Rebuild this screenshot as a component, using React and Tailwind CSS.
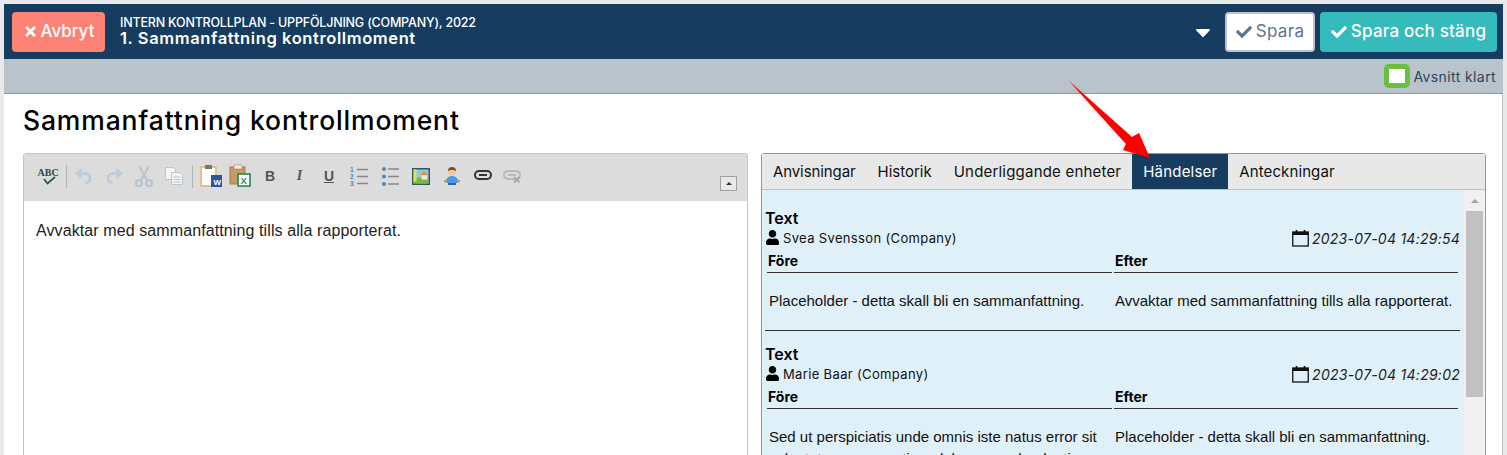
import React from 'react';
import { FaCheck, FaTimes, FaUser, FaCaretDown } from 'react-icons/fa';

const heading = "font-['Inter',sans-serif]";
const body = "font-['Liberation_Sans',Arial,sans-serif]";

const tabs = [
  { label: 'Anvisningar', className: 'tracking-[-0.1px]' },
  { label: 'Historik', className: 'tracking-[0px]' },
  { label: 'Underliggande enheter', className: 'tracking-[0.2px]' },
  { label: 'Händelser', className: 'tracking-[0.2px]' },
  { label: 'Anteckningar', className: 'tracking-[0.1px]' },
];

const events = [
  {
    user: 'Svea Svensson (Company)',
    date: '2023-07-04 14:29:54',
    before: 'Placeholder - detta skall bli en sammanfattning.',
    after: 'Avvaktar med sammanfattning tills alla rapporterat.',
  },
  {
    user: 'Marie Baar (Company)',
    date: '2023-07-04 14:29:02',
    before: 'Sed ut perspiciatis unde omnis iste natus error sit voluptatem accusantium doloremque laudantium',
    after: 'Placeholder - detta skall bli en sammanfattning.',
  },
];

const Spell = () => (
  <svg width="24" height="22" viewBox="0 0 24 22">
    <text x="1.500" y="11" fontSize="10" fontWeight="700" fontFamily="Liberation Serif" fill="#24474a">ABC</text>
    <path d="M8 14l3.500 4.500L19 12" fill="none" stroke="#24575a" strokeWidth="1.800" />
  </svg>
);
const Undo = ({ flip }) => (
  <svg width="20" height="18" viewBox="0 0 20 18" style={{ transform: flip ? 'scaleX(-1)' : undefined }}>
    <path d="M1 6.500L7.500 1v11z" fill="#b9cbdc" />
    <path d="M6 6.500h5.500a4.500 4.500 0 014.500 4.500c0 2.500-2 4.500-4.500 5" fill="none" stroke="#b9cbdc" strokeWidth="2.600" />
  </svg>
);
const Cut = () => (
  <svg width="20" height="22" viewBox="0 0 20 22" fill="none" stroke="#b7c3ce" strokeWidth="2.200">
    <path d="M5 1l8 14M15 1L7 15" />
    <circle cx="5" cy="18" r="3" />
    <circle cx="15" cy="18" r="3" />
  </svg>
);
const Copy = () => (
  <svg width="20" height="20" viewBox="0 0 20 20" fill="#f2f4f6" stroke="#b9c4ce">
    <path d="M1.500 1.500h8l2 2v10h-10z" />
    <path d="M7.500 6.500h8l3 3v9h-11z" />
    <path d="M9.500 11h7M9.500 13.500h7M9.500 16h7" />
  </svg>
);
const PasteWord = () => (
  <svg width="22" height="24" viewBox="0 0 22 24">
    <rect x="1" y="3" width="15" height="19" fill="#fff" stroke="#e3c08d" strokeWidth="2" />
    <rect x="5" y="1" width="7" height="4" fill="#777" />
    <rect x="11" y="11" width="11" height="12" fill="#2b579a" />
    <text x="13.500" y="21" fontSize="8" fontWeight="700" fill="#fff" fontFamily="Liberation Sans">W</text>
  </svg>
);
const PasteExcel = () => (
  <svg width="22" height="24" viewBox="0 0 22 24">
    <rect x="1" y="3" width="15" height="17" fill="#c69a63" stroke="#a87c48" />
    <rect x="5" y="1" width="8" height="4" fill="#f4efe6" stroke="#a87c48" strokeWidth=".6" />
    <rect x="9" y="10" width="12" height="12" fill="#fff" stroke="#1f8b4c" strokeWidth="1.600" />
    <text x="11.500" y="20" fontSize="9.500" fontWeight="700" fill="#1f8b4c" fontFamily="Liberation Sans">X</text>
  </svg>
);
const Letter = ({ children, className }) => (
  <span className={`text-[14px] font-bold leading-none text-[#555] ${className}`}>{children}</span>
);
const OrderedList = () => (
  <svg width="20" height="20" viewBox="0 0 20 20">
    <text x="0" y="6" fontSize="6.500" fontWeight="700" fill="#4a86c0" fontFamily="Liberation Sans">1</text>
    <text x="0" y="13" fontSize="6.500" fontWeight="700" fill="#4a86c0" fontFamily="Liberation Sans">2</text>
    <text x="0" y="20" fontSize="6.500" fontWeight="700" fill="#4a86c0" fontFamily="Liberation Sans">3</text>
    <path d="M7 3.500h11M7 10.500h11M7 17.500h11" stroke="#888" strokeWidth="1.500" />
  </svg>
);
const BulletList = () => (
  <svg width="20" height="20" viewBox="0 0 20 20">
    <circle cx="3" cy="3" r="2" fill="#4a86c0" />
    <circle cx="3" cy="10.500" r="2" fill="#4a86c0" />
    <circle cx="3" cy="18" r="2" fill="#4a86c0" />
    <path d="M7 3h11M7 10.500h11M7 18h11" stroke="#888" strokeWidth="1.500" />
  </svg>
);
const Picture = () => (
  <svg width="18" height="17" viewBox="0 0 18 17">
    <rect x="0" y="0" width="18" height="17" fill="#2f5a55" />
    <rect x="1.500" y="1.500" width="15" height="14" fill="#8cc8e8" />
    <path d="M1.500 11l6-2 9 3v3.500h-15z" fill="#7cb342" />
    <path d="M8 7l4-4 4 4z" fill="#ef8a2d" />
    <rect x="9.500" y="7" width="5.500" height="4.500" fill="#f5e9c8" />
    <rect x="1.500" y="1.500" width="3" height="12" fill="#d9e25a" />
  </svg>
);
const Person = () => (
  <svg width="18" height="20" viewBox="0 0 18 20">
    <circle cx="9" cy="5.500" r="4" fill="#f2c9a0" />
    <path d="M5 5a4 4 0 018 0c-2-1.500-6-1.500-8 0z" fill="#8a4b20" />
    <path d="M3 17c0-5 2-7 6-7s6 2 6 7z" fill="#4d9be6" />
    <circle cx="2.500" cy="15" r="1.500" fill="#e08a3a" />
    <circle cx="15.500" cy="15" r="1.500" fill="#e08a3a" />
    <rect x="5" y="17" width="8" height="2" fill="#2f62b0" />
  </svg>
);
const Link = ({ off }) => (
  <svg width="18" height="14" viewBox="0 0 18 14" fill="none" stroke={off ? '#b8b8b8' : '#333'} strokeWidth="2">
    <rect x="1" y="2" width="16" height="8" rx="4" />
    <path d="M5 6h8" />
    {off && <path d="M11 8l5.500 5.500M16.500 8L11 13.500" stroke="#a8a8a8" />}
  </svg>
);
const Calendar = () => (
  <svg width="17" height="18" viewBox="0 0 17 18" className="shrink-0">
    <rect x=".75" y="3" width="15.500" height="14" fill="none" stroke="#111" strokeWidth="1.300" />
    <rect x=".75" y="3" width="15.500" height="3" fill="#111" />
    <path d="M4.500 1v3M12.500 1v3" stroke="#111" strokeWidth="1.700" />
  </svg>
);
const Sep = () => <span className="h-[23px] w-px bg-[#b0b0b0]" />;

const tools = [
  [<Spell />, 'w-[35px]'],
  [<Sep />, 'w-[2px]'],
  [<Undo />, 'w-[33px]'],
  [<Undo flip />, 'w-[27px]'],
  [<Cut />, 'w-[33px]'],
  [<Copy />, 'w-[28px]'],
  [<Sep />, 'w-[8px]'],
  [<PasteWord />, 'w-[29px]'],
  [<PasteExcel />, 'w-[30px]'],
  [<Letter className={body}>B</Letter>, 'w-[30px]'],
  [<Letter className="font-['Liberation_Serif',serif] italic">I</Letter>, 'w-[29px]'],
  [<Letter className={`${body} underline`}>U</Letter>, 'w-[30px]'],
  [<OrderedList />, 'w-[32px]'],
  [<BulletList />, 'w-[29px]'],
  [<Picture />, 'w-[32px]'],
  [<Person />, 'w-[30px]'],
  [<Link />, 'w-[31px]'],
  [<Link off />, 'w-[28px]'],
];

const EventItem = ({ event, last }) => (
  <div className={`h-[136px] pl-px pt-[13px] ${last ? '' : 'border-b border-[#333]'}`}>
    <div className={`${heading} -ml-px text-[16px] font-semibold leading-[20px] text-black`}>Text</div>
    <div className="flex h-[20px] items-center justify-between">
      <div className={`${heading} -ml-px flex translate-y-px items-center gap-[3px] text-[13px] tracking-[0.35px] text-[#111]`}>
        <FaUser className="mb-[3px] text-[15px] text-black" />
        {event.user}
      </div>
      <div className={`${heading} flex items-center gap-[3px] text-[14px] italic tracking-[0.25px] text-[#222]`}>
        <Calendar />
        {event.date}
      </div>
    </div>
    <div className="mt-[3px] grid grid-cols-[345px_344px] gap-[2px] pl-px">
      <div className={`${heading} h-[22px] border-b border-[#333] pl-px text-[14px] font-bold leading-[20px] text-black`}>Före</div>
      <div className={`${heading} h-[22px] border-b border-[#333] pl-px text-[14px] font-bold leading-[20px] text-black`}>Efter</div>
      <div className={`${body} pl-[2px] pt-[15px] text-[15px] leading-[22px] text-[#111]`}>{event.before}</div>
      <div className={`${body} pl-px pt-[15px] text-[15px] leading-[22px] text-[#111]`}>{event.after}</div>
    </div>
  </div>
);

export default function App() {
  return (
    <div className={`${heading} relative h-screen overflow-hidden bg-[#e9e9e9] px-1 pt-1`}>
      {/* Top bar */}
      <div className="flex h-[55px] items-center bg-[#163d60] pl-2 pr-[6px]">
        <button className="flex h-10 w-[93px] items-center justify-center gap-[3px] rounded bg-[#fd8276] text-[17px] font-medium text-white">
          <FaTimes className="text-[15px]" />
          Avbryt
        </button>
        <div className="ml-[15px] text-white">
          <div className="text-[12.500px] font-medium leading-[14px] tracking-[-0.2px]">INTERN KONTROLLPLAN - UPPFÖLJNING (COMPANY), 2022</div>
          <div className="text-[16.500px] font-semibold leading-[17px] tracking-[0.6px]">1. Sammanfattning kontrollmoment</div>
        </div>
        <FaCaretDown className="ml-auto text-[24px] text-white" />
        <button className="ml-[10px] flex h-10 w-[90px] items-center justify-center gap-1 rounded border-2 border-[#b9c3cc] bg-white text-[17px] tracking-[0.3px] text-[#5b7490]">
          <FaCheck className="text-[16px]" />
          Spara
        </button>
        <button className="ml-[5px] flex h-10 w-[177px] items-center justify-center gap-1 rounded bg-[#35bbbb] text-[17px] font-medium tracking-[0.2px] text-white">
          <FaCheck className="text-[16px]" />
          Spara och stäng
        </button>
      </div>

      {/* Status bar */}
      <div className="flex h-[35px] items-center justify-end border-b border-[#8a9aa8] bg-[#b9c3cc] pr-[7px]">
        <span className="h-[24px] w-[26px] rounded-[5px] border-[5px] border-[#6abf3f] bg-white" />
        <span className="ml-[3px] text-[14px] tracking-[0.4px] text-[#2f4560]">Avsnitt klart</span>
      </div>

      {/* Page */}
      <div className="h-[400px] border-r border-[#c4c4c4] bg-white pl-[19px] pr-[16px]">
        <h1 className="pt-[9px] text-[26.500px] font-medium leading-[34px] tracking-[0.85px] text-black">Sammanfattning kontrollmoment</h1>

        <div className="mt-[16px] flex justify-between">
          {/* Editor */}
          <div className="h-[320px] w-[725px] rounded-t-[3px] border border-[#c4c4c4]">
            <div className="flex h-[47px] items-center bg-[#dcdcdc] pb-[3px] pl-[6px] pr-[10px]">
              {tools.map(([icon, width], i) => (
                <span key={i} className={`flex items-center justify-center ${width}`}>{icon}</span>
              ))}
              <span className="ml-auto mt-[15px] flex h-[15px] w-[17px] items-center justify-center border border-[#a0a0a0] bg-[#e8e8e8]">
                <span className="h-0 w-0 border-x-[3px] border-b-[3px] border-x-transparent border-b-[#333]" />
              </span>
            </div>
            <p className={`${body} pl-[12px] pt-[20px] text-[16px] leading-[20px] tracking-[0.1px] text-[#222]`}>Avvaktar med sammanfattning tills alla rapporterat.</p>
          </div>

          {/* History panel */}
          <div className="h-[320px] w-[725px] rounded-t-[3px] border border-[#8a9aa8]">
            <div className="flex h-[36px] border-b border-[#b9c3cc] bg-[#e8e8e8]">
              {tabs.map((tab) => (
                <span
                  key={tab.label}
                  className={`flex items-center px-[11px] pt-px text-[15px] ${tab.className} ${tab.label === 'Händelser' ? 'bg-[#163d60] text-white' : 'text-[#111]'}`}
                >
                  {tab.label}
                </span>
              ))}
            </div>
            <div className="flex h-[283px]">
              <div className="h-full flex-1 overflow-hidden bg-[#e0f0f8] pl-[3px] pr-[4px] pt-[5px]">
                {events.map((event, i) => (
                  <EventItem key={i} event={event} last={i === events.length - 1} />
                ))}
              </div>
              <div className="h-full w-[21px] bg-[#f0f0f0] px-[2px]">
                <div className="flex h-[21px] items-center justify-center">
                  <span className="h-0 w-0 border-x-[4px] border-b-[4px] border-x-transparent border-b-[#a3a3a3]" />
                </div>
                <div className="h-[186px] bg-[#c1c1c1]" />
              </div>
            </div>
          </div>
        </div>
      </div>

      {/* Annotation arrow */}
      <svg className="absolute left-[1065px] top-[78px] drop-shadow-sm" width="90" height="84" viewBox="0 0 90 84">
        <path d="M4 3 L67 59 L74 55 L85 80 L58 72 L61 66 Z" fill="#fe0000" />
      </svg>
    </div>
  );
}
